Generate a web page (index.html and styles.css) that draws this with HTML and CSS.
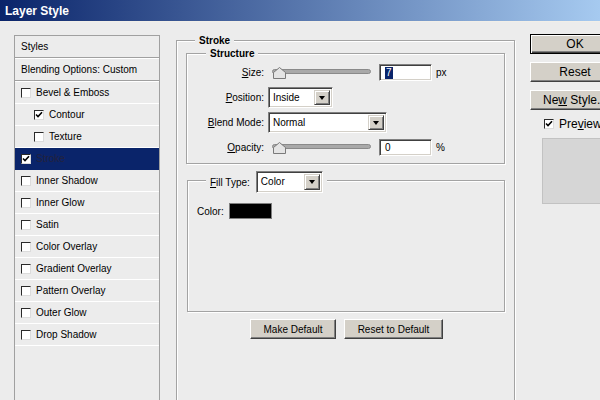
FILE: index.html
```html
<!DOCTYPE html>
<html>
<head>
<meta charset="utf-8">
<title>Layer Style</title>
<link rel="stylesheet" href="styles.css">
</head>
<body>
<div class="window">
  <div class="titlebar">Layer Style</div>
  <div class="content">
    <div class="styles-panel">
      <div class="head-row">Styles</div>
      <div class="head-row">Blending Options: Custom</div>
      <div class="item"><span class="cb"></span>Bevel &amp; Emboss</div>
      <div class="item sub"><span class="cb"><svg width="8" height="8" viewBox="0 0 8 8"><polyline points="1,3.5 3,5.5 7,1.2" fill="none" stroke="#000" stroke-width="1.6"/></svg></span>Contour</div>
      <div class="item sub"><span class="cb"></span>Texture</div>
      <div class="item selected"><span class="cb"><svg width="8" height="8" viewBox="0 0 8 8"><polyline points="1,3.5 3,5.5 7,1.2" fill="none" stroke="#000" stroke-width="1.6"/></svg></span>Stroke</div>
      <div class="item"><span class="cb"></span>Inner Shadow</div>
      <div class="item"><span class="cb"></span>Inner Glow</div>
      <div class="item"><span class="cb"></span>Satin</div>
      <div class="item"><span class="cb"></span>Color Overlay</div>
      <div class="item"><span class="cb"></span>Gradient Overlay</div>
      <div class="item"><span class="cb"></span>Pattern Overlay</div>
      <div class="item"><span class="cb"></span>Outer Glow</div>
      <div class="item"><span class="cb"></span>Drop Shadow</div>
    </div>

    <div class="main">
      <div class="group stroke-group">
        <div class="legend">Stroke</div>
        <div class="group structure">
          <div class="legend structure-legend">Structure</div>
          <div class="form">
            <div class="lbl"><u>S</u>ize:</div>
            <div class="ctrl">
              <svg class="slider" width="100" height="14" viewBox="0 0 100 14"><rect x="0.5" y="3.5" width="98" height="4" rx="2" fill="#a9a9a9" stroke="#8a8a8a"/><polygon points="1.5,12.5 1.5,6.5 7.5,1.5 13.5,6.5 13.5,12.5" fill="#e4e4e4" stroke="#7a7a7a"/></svg>
              <div class="field"><span class="sel">7</span></div>
              <span class="unit">px</span>
            </div>
            <div class="lbl"><u>P</u>osition:</div>
            <div class="ctrl">
              <div class="select pos"><span class="val">Inside</span><span class="arrow"><i></i></span></div>
            </div>
            <div class="lbl"><u>B</u>lend Mode:</div>
            <div class="ctrl">
              <div class="select blend"><span class="val">Normal</span><span class="arrow"><i></i></span></div>
            </div>
            <div class="lbl"><u>O</u>pacity:</div>
            <div class="ctrl">
              <svg class="slider" width="100" height="14" viewBox="0 0 100 14"><rect x="0.5" y="3.5" width="98" height="4" rx="2" fill="#a9a9a9" stroke="#8a8a8a"/><polygon points="1.5,12.5 1.5,6.5 7.5,1.5 13.5,6.5 13.5,12.5" fill="#e4e4e4" stroke="#7a7a7a"/></svg>
              <div class="field">0</div>
              <span class="unit">%</span>
            </div>
          </div>
        </div>
        <div class="group fill">
          <div class="legend fill-legend"><span><u>F</u>ill Type:</span><div class="select filltype"><span class="val">Color</span><span class="arrow"><i></i></span></div></div>
          <div class="color-row"><span>Color:</span><span class="swatch"></span></div>
        </div>
        <div class="btn-row">
          <div class="btn make">Make Default</div>
          <div class="btn resetdef">Reset to Default</div>
        </div>
      </div>
    </div>

    <div class="side">
      <div class="btn big ok">OK</div>
      <div class="btn big">Reset</div>
      <div class="btn big"><span>Ne<u>w</u> Style...</span></div>
      <div class="preview-row"><span class="cb"><svg width="8" height="8" viewBox="0 0 8 8"><polyline points="1,3.5 3,5.5 7,1.2" fill="none" stroke="#000" stroke-width="1.6"/></svg></span><span>Pre<u>v</u>iew</span></div>
      <div class="preview-box"></div>
    </div>
  </div>
</div>
</body>
</html>
```
FILE: styles.css
```css
html, body {
  margin: 0;
  padding: 0;
}
body {
  width: 600px;
  height: 400px;
  overflow: hidden;
  background: #ececec;
  font-family: "Liberation Sans", Arial, sans-serif;
  font-size: 10px;
  color: #000;
}
.titlebar {
  height: 22px;
  box-sizing: border-box;
  padding: 3px 0 0 5px;
  line-height: 17px;
  font-size: 12px;
  font-weight: bold;
  color: #fff;
  background: linear-gradient(to right, #0a246a, #a6caf0);
  border-bottom: 1px solid #f2efe8;
}
.content {
  display: flex;
  align-items: flex-start;
  padding-top: 12px;
}
.content > * {
  flex-shrink: 0;
}
/* left styles list */
.styles-panel {
  margin: 1px 0 0 14px;
  width: 146px;
  height: 365px;
  box-sizing: border-box;
  border: 1px solid #a0a0a0;
  border-bottom: none;
}
.head-row {
  height: 21px;
  line-height: 21px;
  padding-left: 6px;
  border-bottom: 1px solid #a0a0a0;
  box-shadow: 0 1px 0 #fff;
  margin-bottom: 1px;
}
.item {
  height: 21px;
  display: flex;
  align-items: center;
  padding-left: 6px;
  border-bottom: 1px solid #fff;
}
.item.sub {
  padding-left: 19px;
}
.item.selected {
  background: #0a246a;
  border-bottom-color: #0a246a;
  color: #22223c;
}
.cb {
  width: 10px;
  height: 10px;
  box-sizing: border-box;
  border: 1px solid;
  border-color: #2a2a2a #dcdcdc #dcdcdc #2a2a2a;
  background: #fff;
  margin-right: 5px;
  display: flex;
  align-items: center;
  justify-content: center;
}
.cb svg {
  display: block;
}
/* group boxes */
.group {
  box-sizing: border-box;
  border: 1px solid #a3a3a3;
  box-shadow: inset 1px 1px 0 #fff, 1px 1px 0 #fff;
}
.legend {
  width: max-content;
  margin: -7px 0 0 18px;
  padding: 0 4px;
  line-height: 13px;
  background: #ececec;
  font-weight: bold;
}
.main {
  margin: 6px 0 0 16px;
}
.stroke-group {
  width: 339px;
  height: 360px;
  border-bottom: none;
}
.structure {
  margin: 6px 0 0 9px;
  width: 319px;
  height: 111px;
}
.structure-legend {
  margin-left: 19px;
}
.form {
  display: grid;
  grid-template-columns: 77px auto;
  grid-auto-rows: 21px;
  column-gap: 4px;
  row-gap: 4px;
  margin-top: 2px;
  align-items: center;
}
.lbl {
  text-align: right;
}
.ctrl {
  display: flex;
  align-items: center;
}
.slider {
  display: block;
  margin-left: 4px;
}
.field {
  margin-left: 7px;
  width: 53px;
  height: 17px;
  box-sizing: border-box;
  border: 1px solid;
  border-color: #808080 #fff #fff #808080;
  box-shadow: inset 1px 1px 0 #404040, inset -1px -1px 0 #d4d0c8;
  background: #fff;
  padding: 2px 0 0 5px;
  line-height: 12px;
}
.sel {
  display: inline-block;
  background: #0a246a;
  color: #fff;
  padding: 0 1px;
}
.unit {
  margin-left: 4px;
}
.select {
  display: flex;
  height: 21px;
  box-sizing: border-box;
  border: 1px solid;
  border-color: #808080 #fff #fff #808080;
  box-shadow: inset 1px 1px 0 #404040, inset -1px -1px 0 #d4d0c8;
  background: #fff;
  padding: 2px;
}
.select .val {
  flex: 1;
  padding-left: 2px;
  line-height: 15px;
}
.select .arrow {
  width: 16px;
  box-sizing: border-box;
  background: #d4d0c8;
  border: 1px solid;
  border-color: #d4d0c8 #404040 #404040 #d4d0c8;
  box-shadow: inset 1px 1px 0 #fff, inset -1px -1px 0 #808080;
  display: flex;
  align-items: center;
  justify-content: center;
}
.select .arrow i {
  width: 0;
  height: 0;
  border-left: 3.5px solid transparent;
  border-right: 3.5px solid transparent;
  border-top: 4px solid #000;
}
.select.pos {
  width: 65px;
}
.select.blend {
  width: 119px;
}
.fill {
  margin: 16px 0 0 10px;
  width: 318px;
  height: 132px;
}
.fill-legend {
  display: flex;
  align-items: center;
  gap: 6px;
  margin: -10px 0 0 18px;
  height: 22px;
  font-weight: normal;
}
.select.filltype {
  width: 67px;
  height: 22px;
}
.color-row {
  display: flex;
  align-items: center;
  gap: 5px;
  margin: 10px 0 0 9px;
  height: 16px;
}
.swatch {
  width: 43px;
  height: 16px;
  box-sizing: border-box;
  background: #000;
  border: 1px solid #7f7f7f;
}
.btn-row {
  display: flex;
  gap: 8px;
  margin: 7px 0 0 73px;
}
.btn {
  height: 20px;
  box-sizing: border-box;
  background: #d4d0c8;
  border: 1px solid;
  border-color: #fff #404040 #404040 #fff;
  box-shadow: inset -1px -1px 0 #808080;
  display: flex;
  align-items: center;
  justify-content: center;
  white-space: nowrap;
}
.btn.make {
  width: 86px;
}
.btn.resetdef {
  width: 99px;
}
/* right column */
.side {
  margin-left: 15px;
  width: 70px;
  font-size: 12px;
}
.btn.big {
  width: 90px;
  margin-bottom: 8px;
}
.btn.ok {
  border-color: #000;
  box-shadow: inset 1px 1px 0 #fff, inset -1px -1px 0 #404040, inset -2px -2px 0 #808080;
}
.preview-row {
  display: flex;
  align-items: center;
  height: 14px;
  margin: -1px 0 0 14px;
  white-space: nowrap;
}
.preview-box {
  margin: 7px 0 0 12px;
  width: 58px;
  height: 66px;
  box-sizing: border-box;
  background: #d6d6d6;
  border: 1px solid #c2c2c2;
  border-right: none;
}
```
